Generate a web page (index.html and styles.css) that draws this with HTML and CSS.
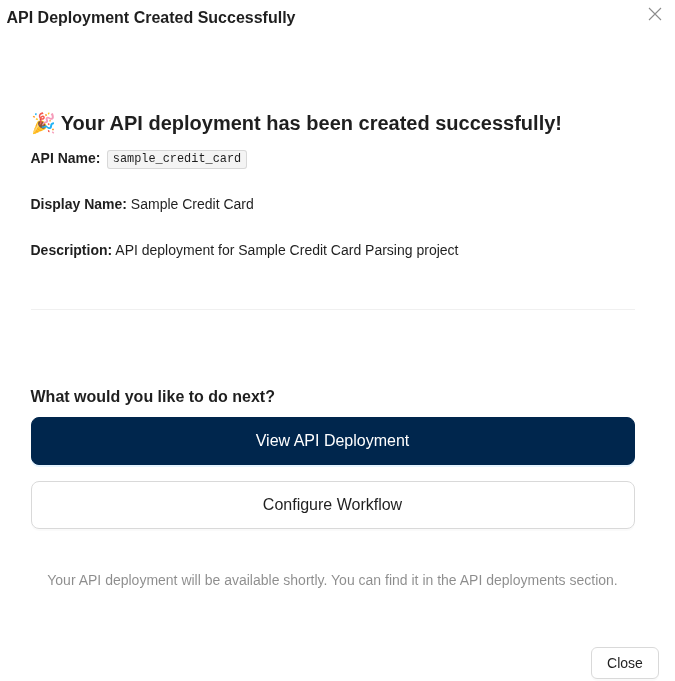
FILE: index.html
```html
<!DOCTYPE html>
<html lang="en">
<head>
	<meta charset="UTF-8">
	<meta name="viewport" content="width=device-width, initial-scale=1.0">
	<title>API Deployment Created Successfully</title>

	<link rel="stylesheet" href="styles.css">
</head>
<body>
	<div class="modal">
		<header class="modal-header">
			<h2 class="modal-title">API Deployment Created Successfully</h2>
			<button class="modal-x" aria-label="Close">
				<svg width="14" height="14" viewBox="0 0 14 14" fill="none" stroke="#8c8c8c" stroke-width="1.1">
					<path d="M1 1 L13 13 M13 1 L1 13"/>
				</svg>
			</button>
		</header>

		<main class="modal-body">
			<section class="summary">
				<h3 class="summary-title">🎉 Your API deployment has been created successfully!</h3>
				<p class="summary-row"><strong>API Name:</strong> <code>sample_credit_card</code></p>
				<p class="summary-row"><strong>Display Name:</strong> Sample Credit Card</p>
				<p class="summary-row"><strong>Description:</strong> API deployment for Sample Credit Card Parsing project</p>
			</section>

			<hr class="divider">

			<section class="next">
				<h4 class="next-title">What would you like to do next?</h4>
				<div class="next-actions">
					<button class="btn-large btn-primary">View API Deployment</button>
					<button class="btn-large">Configure Workflow</button>
				</div>
				<p class="next-note">Your API deployment will be available shortly. You can find it in the API deployments section.</p>
			</section>
		</main>

		<footer class="modal-footer">
			<button class="btn-close">Close</button>
		</footer>
	</div>
</body>
</html>
```
FILE: styles.css
```css
*,
*::before,
*::after {
	margin: 0;
	padding: 0;
	box-sizing: border-box;
}

html, body {
	width: 100%;
	height: 100%;
	overflow: hidden;
}

body {
	background: #fff;
	color: rgba(0, 0, 0, 0.88);
	font-family: "Liberation Sans", Arial, sans-serif;
	font-size: 14px;
	line-height: 22px;
}

button {
	font-family: inherit;
	cursor: pointer;
	background: #fff;
	color: inherit;
}

.modal {
	height: 681px;
	display: flex;
	flex-direction: column;
	will-change: transform;
}

/* header */
.modal-header {
	display: flex;
	justify-content: space-between;
	align-items: flex-start;
	height: 31px;
	padding: 6px 12px 0 6.5px;
}

.modal-title {
	font-size: 16px;
	line-height: 24px;
	font-weight: 700;
}

.modal-x {
	border: 0;
	background: none;
	width: 16px;
	height: 16px;
	display: flex;
	align-items: center;
	justify-content: center;
}

/* body */
.modal-body {
	flex: 1;
	padding: 77px 40.5px 0 30.5px;
}

.summary-title {
	font-size: 20px;
	line-height: 30px;
	font-weight: 700;
	margin-bottom: 9px;
}

.summary-row {
	margin-bottom: 24px;
}

.summary-row strong {
	font-weight: 700;
}

.summary-row code {
	font-family: "Liberation Mono", monospace;
	font-size: 11.9px;
	line-height: 17px;
	display: inline-block;
	vertical-align: 1px;
	margin: 0 2.6px;
	padding: 0 4.76px;
	background: rgba(150, 150, 150, 0.1);
	border: 1px solid rgba(100, 100, 100, 0.2);
	border-radius: 3px;
}

.divider {
	border: 0;
	border-top: 1px solid rgba(5, 5, 5, 0.06);
	margin-top: 48px;
}

/* next steps */
.next {
	padding-top: 75px;
}

.next-title {
	font-size: 16px;
	line-height: 24px;
	font-weight: 700;
	margin-bottom: 8px;
}

.next-actions {
	display: flex;
	flex-direction: column;
	gap: 16px;
}

.btn-large {
	height: 48px;
	width: 100%;
	font-size: 16px;
	border: 1px solid #d9d9d9;
	border-radius: 8px;
	box-shadow: 0 2px 0 rgba(0, 0, 0, 0.02);
}

.btn-primary {
	background: #00264d;
	border-color: #00264d;
	color: #fff;
	box-shadow: 0 2px 0 rgba(5, 145, 255, 0.1);
}

.next-note {
	margin-top: 40px;
	text-align: center;
	color: rgba(0, 0, 0, 0.45);
}

/* footer */
.modal-footer {
	display: flex;
	justify-content: flex-end;
	padding: 0 16px 2px 0;
}

.btn-close {
	width: 68px;
	height: 32px;
	font-size: 14px;
	border: 1px solid #d9d9d9;
	border-radius: 6px;
	box-shadow: 0 2px 0 rgba(0, 0, 0, 0.02);
}
```
